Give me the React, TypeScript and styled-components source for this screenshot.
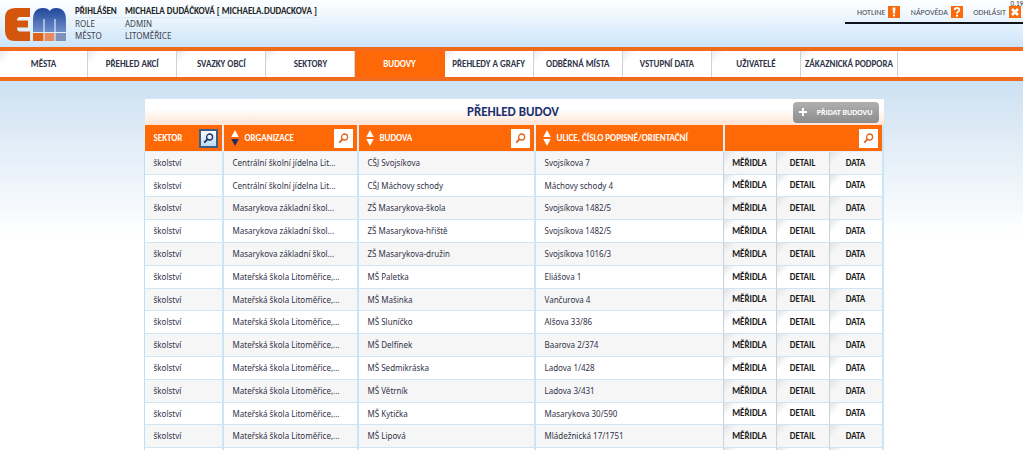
import React from "react";
import styled, { createGlobalStyle, css } from "styled-components";

const Global = createGlobalStyle`
  * { box-sizing: border-box; }
  html { min-height: 100%; background: #fff; }
  body {
    margin: 0;
    overflow: hidden;
    color: #2f3347;
    font-family: Calibri, Carlito, "Noto Sans", sans-serif;
    font-size: 9px;
    line-height: 12px;
  }
  button { font: inherit; cursor: pointer; }
  a { color: inherit; text-decoration: none; }
`;

const smallText = css`
  font-family: "Noto Sans", "Open Sans", sans-serif;
  font-size: 8px;
`;

const Page = styled.div`
  height: 100vh;
  overflow: hidden;
  display: flex;
  flex-direction: column;
`;

const Header = styled.header`
  flex: none;
  height: 47px;
  display: flex;
  align-items: flex-start;
  background: linear-gradient(#ffffff, #cce5fb);
`;

const Logo = styled.svg`
  flex: none;
  width: 62px;
  height: 34px;
  margin: 8px 8px 0 5px;
`;

const UserTable = styled.table`
  border-collapse: collapse;
  margin-top: 5px;
  th, td {
    ${smallText}
    padding: 0;
    height: 12px;
    line-height: 11px;
    font-weight: 400;
    text-align: left;
    white-space: nowrap;
    color: #3c4048;
  }
  th { width: 50px; }
  td { width: 186px; }
  tr + tr > * { border-top: 1px solid #dcebf7; }
  tr:first-child > * {
    font-family: Calibri, Carlito, "Noto Sans", sans-serif;
    font-size: 9px;
    font-weight: 700;
    color: #222;
  }
`;

const Tools = styled.nav`
  width: 178px;
  height: 24px;
  margin-left: auto;
  padding: 6px 2px 0 12px;
  display: flex;
  justify-content: space-between;
  border-bottom: 2px solid #10141a;
  position: relative;
`;

const ToolLink = styled.a`
  display: flex;
  align-items: center;
  gap: 3px;
  height: 12px;
  font-size: 8px;
  white-space: nowrap;
  color: #44484e;
`;

const ToolIcon = styled.svg`
  flex: none;
  width: 12px;
  height: 12px;
  background: #fd6a0b;
`;

const Timing = styled.span`
  position: absolute;
  top: 0;
  right: 0;
  font-size: 7px;
  line-height: 7px;
  color: #333;
`;

const MainNav = styled.nav`
  flex: none;
  height: 34px;
  display: flex;
  background: #fff;
  border-top: 4px solid #f26a1b;
  border-bottom: 4px solid #f26a1b;
  padding-right: 125px;
`;

const NavItem = styled.a<{ $active?: boolean; $wide?: boolean }>`
  flex: ${(p) => (p.$wide ? 97 : 89)} 1 0;
  min-width: 0;
  display: flex;
  align-items: center;
  justify-content: center;
  border-right: 1px solid #cfd3d8;
  background: linear-gradient(135deg, #e9e9eb, #fff 10px);
  font-weight: 700;
  white-space: nowrap;
  ${(p) =>
    p.$active &&
    css`
      background: #ff6806;
      border-color: #ff6806;
      color: #fff;
    `}
  &:first-child { flex-grow: 88; }
`;

const Main = styled.main`
  flex: 1;
  padding: 18px 0 0 4px;
  background: linear-gradient(#cce2f6, #d3e4f3 18px, #ffffff 155px);
`;

const Panel = styled.section`
  width: calc(100% - 32px);
  max-width: 740px;
  margin: 0 auto;
`;

const TitleBar = styled.div`
  height: 26px;
  display: grid;
  grid-template-columns: 1fr auto 1fr;
  align-items: center;
  padding: 0 5px 0 3px;
  margin-left: 1px;
  background: linear-gradient(#fff 40%, #ffe3d2);
`;

const Title = styled.h1`
  grid-column: 2;
  margin: 0;
  font-size: 13px;
  line-height: 16px;
  font-weight: 700;
  color: #1d2f6f;
`;

const AddButton = styled.button`
  justify-self: end;
  width: 86px;
  height: 21px;
  display: flex;
  align-items: center;
  justify-content: space-between;
  padding: 0 6px;
  border: 0;
  border-radius: 4px;
  background: linear-gradient(#b0b0b0, #8c8c8c);
  color: #fff;
  font-size: 8px;
  font-weight: 700;
`;

const DataTable = styled.table`
  width: 100%;
  table-layout: fixed;
  border-collapse: separate;
  border-spacing: 0;
  border-right: 2px solid #c9e5f8;
`;

const HeadCell = styled.th`
  height: 27px;
  padding: 0;
  background: #ff6806;
  border-left: 1px solid #e3eef6;
  border-bottom: 1px solid #e3eef6;
  color: #fff;
  font-weight: 700;
  text-align: left;
  & + & { border-left-width: 2px; }
`;

const HeadContent = styled.div<{ $plain?: boolean }>`
  display: flex;
  align-items: center;
  gap: 6px;
  padding: 0 4px 0 ${(p) => (p.$plain ? 9 : 7)}px;
  white-space: nowrap;
`;

const SearchButton = styled.button<{ $active?: boolean }>`
  width: 19px;
  height: 19px;
  margin-left: auto;
  padding: 0;
  display: grid;
  place-items: center;
  border: ${(p) => (p.$active ? "2px solid #3f5e86" : "0")};
  background: ${(p) => (p.$active ? "linear-gradient(#fff, #b9dcf7)" : "#fff")};
  color: ${(p) => (p.$active ? "#1b2f66" : "#e0641b")};
`;

const SortButton = styled.button`
  width: 8px;
  height: 18px;
  padding: 0;
  border: 0;
  background: none;
  display: grid;
`;

const Row = styled.tr`
  height: 23px;
  background: #fff;
  &:nth-child(odd) { background: #f6f6f6; }
  &:nth-child(5n + 2) { height: 22px; }
`;

const Cell = styled.td`
  ${smallText}
  padding: 0 0 0 9px;
  border-left: 1px solid #bfdff5;
  border-bottom: 1px solid #cfe5f5;
  white-space: nowrap;
  overflow: hidden;
  & + & { border-left: 2px solid #cbe5f7; }
`;

const ActionCell = styled.td`
  padding: 0 0 1px;
  border-left: 1px solid #c3d3e0;
  border-bottom: 1px solid #cfe5f5;
  background: linear-gradient(135deg, #e0e2e5, transparent 10px);
  text-align: center;
  font-weight: 700;
  color: #1c1c20;
`;

const nav = [
  "MĚSTA", "PŘEHLED AKCÍ", "SVAZKY OBCÍ", "SEKTORY", "BUDOVY", "PŘEHLEDY A GRAFY",
  "ODBĚRNÁ MÍSTA", "VSTUPNÍ DATA", "UŽIVATELÉ", "ZÁKAZNICKÁ PODPORA",
];

const canteen = "Centrální školní jídelna Lit...";
const primary = "Masarykova základní škol...";
const nursery = "Mateřská škola Litoměřice,...";

const rows: [string, string, string][] = [
  [canteen, "CŠJ Svojsíkova", "Svojsíkova 7"],
  [canteen, "CŠJ Máchovy schody", "Máchovy schody 4"],
  [primary, "ZŠ Masarykova-škola", "Svojsíkova 1482/5"],
  [primary, "ZŠ Masarykova-hřiště", "Svojsíkova 1482/5"],
  [primary, "ZŠ Masarykova-družin", "Svojsíkova 1016/3"],
  [nursery, "MŠ Paletka", "Eliášova 1"],
  [nursery, "MŠ Mašinka", "Vančurova 4"],
  [nursery, "MŠ Sluníčko", "Alšova 33/86"],
  [nursery, "MŠ Delfínek", "Baarova 2/374"],
  [nursery, "MŠ Sedmikráska", "Ladova 1/428"],
  [nursery, "MŠ Větrník", "Ladova 3/431"],
  [nursery, "MŠ Kytička", "Masarykova 30/590"],
  [nursery, "MŠ Lipová", "Mládežnická 17/1751"],
];

function Search({ active, label }: { active?: boolean; label: string }) {
  return (
    <SearchButton $active={active} aria-label={label}>
      <svg width="11" height="11" viewBox="0 0 11 11" fill="none" stroke="currentColor">
        <circle cx="6.6" cy="4" r="3" strokeWidth="1.3" />
        <path d="M4.4 6.3L1.2 9.7" strokeWidth="1.8" />
      </svg>
    </SearchButton>
  );
}

function Sort({ down, label }: { down?: boolean; label: string }) {
  return (
    <SortButton aria-label={label}>
      <svg width="8" height="18" viewBox="0 0 8 18">
        <path d="M4 1L7.7 8H.3z" fill="#fff" />
        <path d="M4 17L7.7 10H.3z" fill={down ? "#1b2f66" : "#fff"} />
      </svg>
    </SortButton>
  );
}

export default function App() {
  return (
    <Page>
      <Global />
      <Header>
        <Logo viewBox="0 0 62 34" role="img" aria-label="EM">
          <defs>
            <linearGradient id="blue" x1="0" y1="0" x2="0" y2="1">
              <stop offset="0" stopColor="#20479b" />
              <stop offset="1" stopColor="#6f8fcb" />
            </linearGradient>
          </defs>
          <path d="M25 0H10Q0 0 0 10V23Q0 33 10 33H25V23.5H15Q12 23.5 12 19.5H23V12.5H12Q12 9 15 9H25z" fill="#d4550c" />
          <path d="M28 24V12Q28 0 38 0Q43 0 44.7 3Q46.5 0 51 0Q61 0 61 12V24z" fill="url(#blue)" />
          <path d="M39 11V24M50 11V24" stroke="#dbe9f7" strokeWidth="1.2" />
          <path d="M28 25H38.4V33H28z" fill="#e0611a" />
          <path d="M39.6 25H49.4V33H39.6z" fill="#e88a60" />
          <path d="M50.6 25H61V33H50.6z" fill="#8290bd" />
        </Logo>
        <UserTable>
          <tbody>
            <tr><th scope="row">PŘIHLÁŠEN</th><td>MICHAELA DUDÁČKOVÁ [ MICHAELA.DUDACKOVA ]</td></tr>
            <tr><th scope="row">ROLE</th><td>ADMIN</td></tr>
            <tr><th scope="row">MĚSTO</th><td>LITOMĚŘICE</td></tr>
          </tbody>
        </UserTable>
        <Tools>
          <ToolLink href="#hotline">
            HOTLINE
            <ToolIcon viewBox="0 0 12 12"><path d="M4.5 1.5h3L7 7.5H5zM5 8.6h2v2H5z" fill="#fff" /></ToolIcon>
          </ToolLink>
          <ToolLink href="#help">
            NÁPOVĚDA
            <ToolIcon viewBox="0 0 12 12">
              <path d="M3.6 4Q3.8 2 6 2T8.4 4Q8.4 5.2 6.9 5.9Q6 6.3 6 7.6" fill="none" stroke="#fff" strokeWidth="1.8" />
              <path d="M5 8.8h2v1.9H5z" fill="#fff" />
            </ToolIcon>
          </ToolLink>
          <ToolLink href="#logout">
            ODHLÁSIT
            <ToolIcon viewBox="0 0 12 12"><path d="M3 3l6 6M9 3l-6 6" stroke="#fff" strokeWidth="2.6" /></ToolIcon>
          </ToolLink>
          <Timing>0.19</Timing>
        </Tools>
      </Header>
      <MainNav>
        {nav.map((n, i) => (
          <NavItem key={n} href="#" $active={n === "BUDOVY"} $wide={i === nav.length - 1}>{n}</NavItem>
        ))}
      </MainNav>
      <Main>
        <Panel>
          <TitleBar>
            <Title>PŘEHLED BUDOV</Title>
            <AddButton>
              <svg width="8" height="8" viewBox="0 0 8 8"><path d="M4 0v8M0 4h8" stroke="#fff" strokeWidth="2" /></svg>
              PŘIDAT BUDOVU
            </AddButton>
          </TitleBar>
          <DataTable>
            <colgroup>
              <col width="78" />
              <col width="135" />
              <col width="177" />
              <col width="189" />
              <col width="53" />
              <col width="53" />
              <col width="53" />
            </colgroup>
            <thead>
              <tr>
                <HeadCell><HeadContent $plain>SEKTOR<Search active label="Hledat sektor" /></HeadContent></HeadCell>
                <HeadCell><HeadContent><Sort down label="Řadit organizace" />ORGANIZACE<Search label="Hledat organizaci" /></HeadContent></HeadCell>
                <HeadCell><HeadContent><Sort label="Řadit budovy" />BUDOVA<Search label="Hledat budovu" /></HeadContent></HeadCell>
                <HeadCell><HeadContent><Sort label="Řadit ulice" />ULICE, ČÍSLO POPISNÉ/ORIENTAČNÍ</HeadContent></HeadCell>
                <HeadCell colSpan={3}><HeadContent><Search label="Hledat" /></HeadContent></HeadCell>
              </tr>
            </thead>
            <tbody>
              {[...rows, ["", "", ""]].map(([org, building, street], i) => (
                <Row key={i}>
                  <Cell>{org && "školství"}</Cell>
                  <Cell>{org}</Cell>
                  <Cell>{building}</Cell>
                  <Cell>{street}</Cell>
                  <ActionCell>{org && <a href="#meters">MĚŘIDLA</a>}</ActionCell>
                  <ActionCell>{org && <a href="#detail">DETAIL</a>}</ActionCell>
                  <ActionCell>{org && <a href="#data">DATA</a>}</ActionCell>
                </Row>
              ))}
            </tbody>
          </DataTable>
        </Panel>
      </Main>
    </Page>
  );
}
